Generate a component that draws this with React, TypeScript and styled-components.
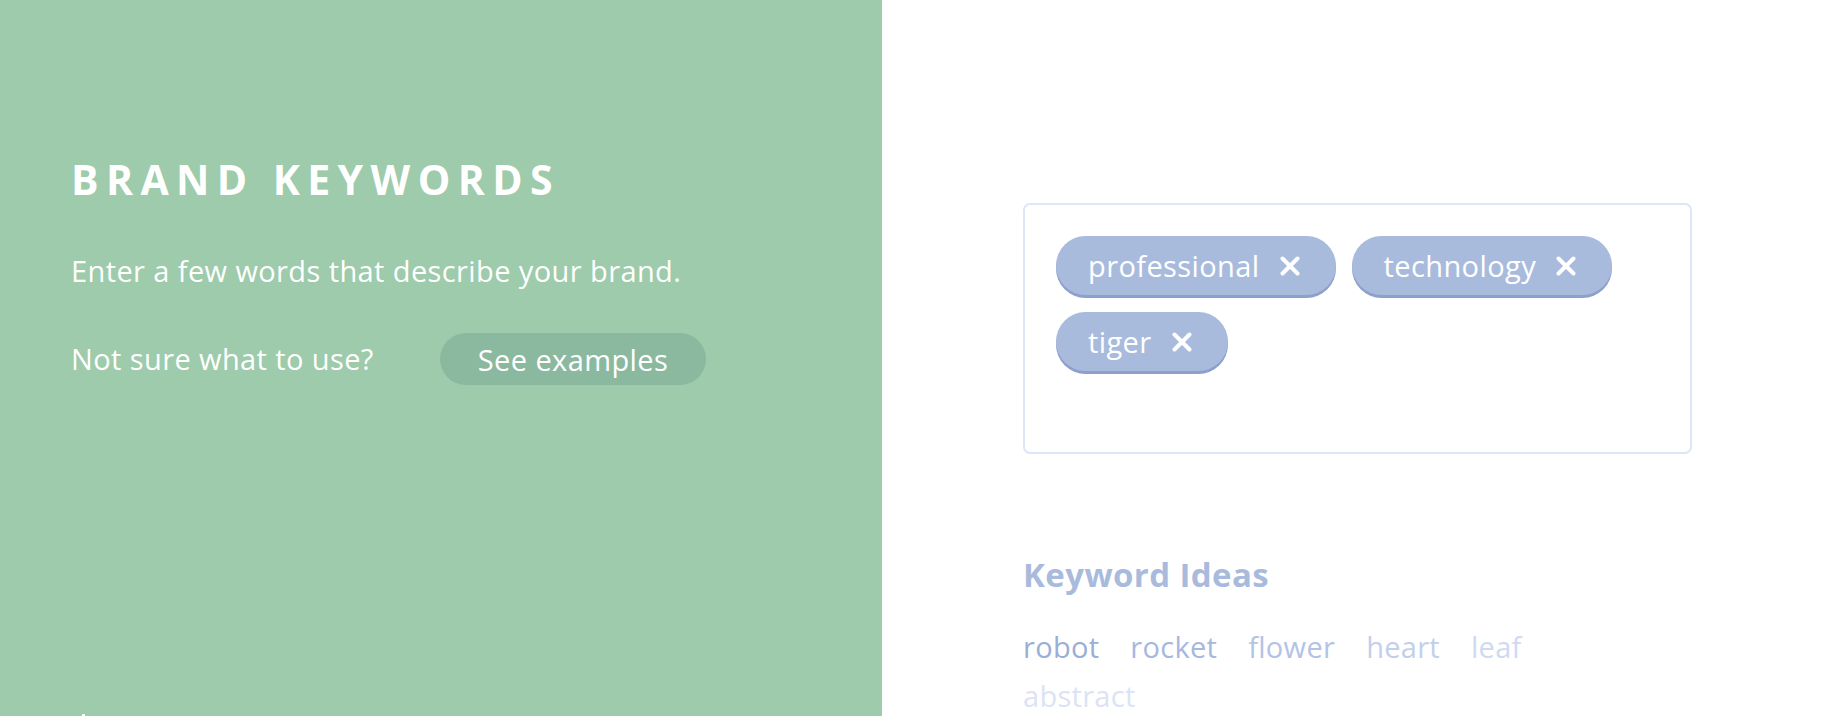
import React from 'react';
import styled, { createGlobalStyle } from 'styled-components';

const GlobalStyle = createGlobalStyle`
  html, body {
    margin: 0;
    padding: 0;
    background: #ffffff;
  }
  body {
    font-family: 'Open Sans', 'Liberation Sans', sans-serif;
    -webkit-font-smoothing: antialiased;
  }
`;

const chips = ['professional', 'technology', 'tiger'];

const ideas = [
  { word: 'robot', color: '#9aaed7' },
  { word: 'rocket', color: '#a6b8de' },
  { word: 'flower', color: '#b3c3e5' },
  { word: 'heart', color: '#c2cfeb' },
  { word: 'leaf', color: '#cfdaf1' },
  { word: 'abstract', color: '#dbe3f5' },
];

const CloseIcon = () => (
  <svg width="22" height="20" viewBox="0 0 22 20">
    <path d="M3.5 2.5 L18.5 17.5 M18.5 2.5 L3.5 17.5" stroke="#ffffff" strokeWidth="4" strokeLinecap="round" />
  </svg>
);

const App = () => {
  return (
    <>
      <GlobalStyle />
      <Page>
        <Intro>
          <Title>BRAND KEYWORDS</Title>
          <Lead>Enter a few words that describe your brand.</Lead>
          <HelpRow>
            <Lead as="span">Not sure what to use?</Lead>
            <ExamplesButton>See examples</ExamplesButton>
          </HelpRow>
          <Spacer />
          <CutMark />
        </Intro>
        <Editor>
          <TagBox>
            {chips.map((chip) => (
              <Chip key={chip}>
                <ChipLabel>{chip}</ChipLabel>
                <CloseIcon />
              </Chip>
            ))}
          </TagBox>
          <IdeasTitle>Keyword Ideas</IdeasTitle>
          <IdeasList>
            {ideas.map((idea) => (
              <Idea key={idea.word} $color={idea.color}>
                {idea.word}
              </Idea>
            ))}
          </IdeasList>
        </Editor>
      </Page>
    </>
  );
};

const Page = styled.div`
  display: flex;
  width: 1824px;
  height: 716px;
  overflow: hidden;
`;

const Intro = styled.section`
  flex: 0 0 882px;
  box-sizing: border-box;
  height: 716px;
  padding: 155px 0 0 71px;
  background: #9dcbab;
  color: #ffffff;
  display: flex;
  flex-direction: column;
`;

const Title = styled.h1`
  margin: 0;
  font-family: 'Open Sans', 'Liberation Sans', sans-serif;
  font-weight: 700;
  font-size: 41px;
  line-height: 48px;
  letter-spacing: 7.4px;
`;

const Lead = styled.p`
  margin: 50px 0 0;
  font-size: 29px;
  line-height: 36px;
  font-weight: 400;
  letter-spacing: 0.4px;
`;

const HelpRow = styled.div`
  display: flex;
  align-items: center;
  gap: 66px;
  margin-top: 44px;

  & > span {
    margin: 0;
  }
`;

const ExamplesButton = styled.button`
  height: 52px;
  padding: 0 38px;
  border: none;
  border-radius: 26px;
  background: #8bb9a0;
  color: #ffffff;
  font-family: 'Open Sans', 'Liberation Sans', sans-serif;
  font-size: 29px;
  letter-spacing: 0.4px;
  cursor: pointer;
`;

const Spacer = styled.div`
  flex: 1;
`;

const CutMark = styled.div`
  width: 3px;
  height: 2px;
  margin-left: 11px;
  background: #ffffff;
  border-radius: 1px 1px 0 0;
`;

const Editor = styled.section`
  flex: 1;
  box-sizing: border-box;
  padding: 203px 0 0 141px;
`;

const TagBox = styled.div`
  box-sizing: border-box;
  width: 669px;
  height: 251px;
  padding: 31px 31px;
  border: 2px solid #dce6f7;
  border-radius: 7px;
  display: flex;
  flex-wrap: wrap;
  align-content: flex-start;
  gap: 17px 16px;
`;

const Chip = styled.div`
  display: flex;
  align-items: center;
  gap: 19px;
  height: 59px;
  box-sizing: border-box;
  padding: 0 35px 0 32px;
  border-radius: 30px;
  background: #a9bbdd;
  box-shadow: 0 3px 0 #8d9fcb;
  color: #ffffff;
`;

const ChipLabel = styled.span`
  font-size: 29px;
  line-height: 1;
  letter-spacing: 0.4px;
  padding-bottom: 1px;
`;

const IdeasTitle = styled.h2`
  margin: 101px 0 0;
  font-family: 'Open Sans', 'Liberation Sans', sans-serif;
  font-weight: 700;
  font-size: 33px;
  line-height: 40px;
  letter-spacing: 0.4px;
  color: #a9bbdd;
`;

const IdeasList = styled.div`
  display: flex;
  flex-wrap: wrap;
  width: 540px;
  column-gap: 31px;
  margin: 27px 0 0;
`;

const Idea = styled.span<{ $color: string }>`
  font-size: 29px;
  line-height: 49px;
  letter-spacing: 0.3px;
  color: ${(props) => props.$color};
`;

export default App;
